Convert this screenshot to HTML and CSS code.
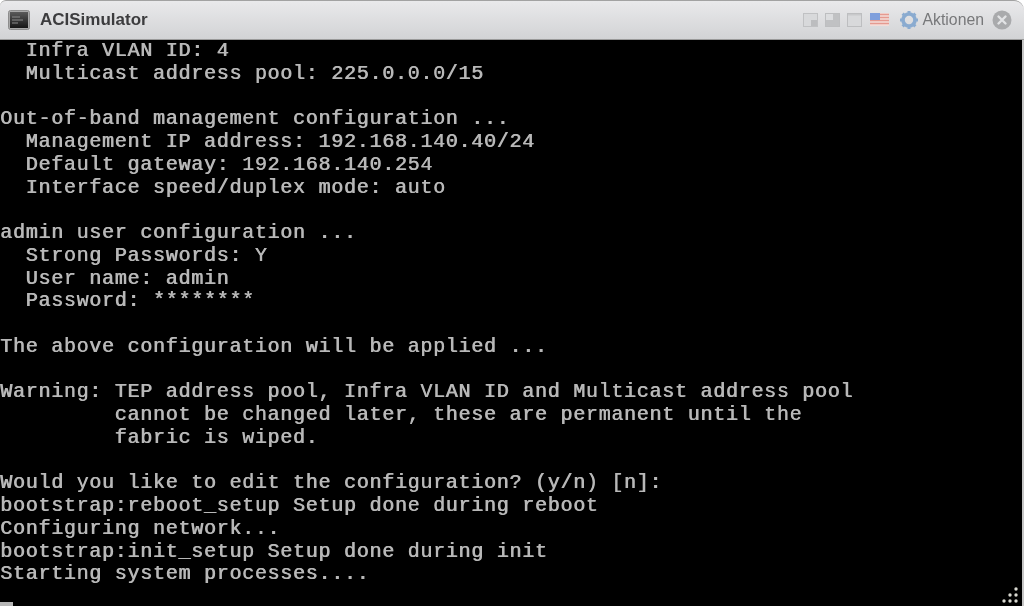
FILE: index.html
```html
<!DOCTYPE html>
<html lang="de">
<head>
<meta charset="utf-8">
<title>ACISimulator</title>
<link rel="stylesheet" href="styles.css">
</head>
<body>
<div class="window">
  <header class="titlebar">
    <div class="title-left">
      <svg class="app-icon" width="22" height="20" viewBox="0 0 22 20">
        <defs><linearGradient id="scr" x1="0" y1="0" x2="0" y2="1"><stop offset="0" stop-color="#5a5a5a"/><stop offset="1" stop-color="#161616"/></linearGradient></defs>
        <rect x="0.5" y="0.5" width="21" height="19" rx="2" fill="#a9a9a9" stroke="#8d8d8d"/>
        <rect x="2" y="2" width="18" height="16" fill="url(#scr)"/>
        <path d="M4 7h8M4 10h11M4 13h6" stroke="#8a8a8a" stroke-width="1.2"/>
      </svg>
      <span class="title">ACISimulator</span>
    </div>
    <div class="title-right">
      <svg class="tool" width="15" height="14" viewBox="0 0 15 14"><rect x="0.5" y="0.5" width="14" height="13" fill="#d8d9db" stroke="#c0c1c3"/><rect x="8" y="7" width="6" height="6" fill="#bcbdbf"/></svg>
      <svg class="tool" width="15" height="14" viewBox="0 0 15 14"><rect x="0.5" y="0.5" width="14" height="13" fill="#c0c1c3" stroke="#bdbec0"/><rect x="1" y="1" width="7" height="6" fill="#dcdddf"/></svg>
      <svg class="tool" width="15" height="14" viewBox="0 0 15 14"><rect x="0.5" y="0.5" width="14" height="13" fill="#d8d9db" stroke="#bdbec0"/><rect x="1" y="1" width="13" height="1.5" fill="#c8c9cb"/></svg>
      <svg class="flag" width="19" height="13" viewBox="0 0 19 13">
        <rect width="19" height="13" fill="#f3dcd8"/>
        <path d="M0 1.5h19M0 4.5h19M0 7.5h19M0 10.5h19" stroke="#e59a90" stroke-width="1.4"/>
        <rect width="10" height="7" fill="#7f9fdc"/>
      </svg>
      <svg class="gear" width="20" height="20" viewBox="0 0 20 20">
        <circle cx="10" cy="10" r="6" fill="none" stroke="#8aabd0" stroke-width="3.6"/>
        <path d="M10 1v3M10 16v3M1 10h3M16 10h3M3.6 3.6l2.1 2.1M14.3 14.3l2.1 2.1M3.6 16.4l2.1-2.1M14.3 5.7l2.1-2.1" stroke="#8aabd0" stroke-width="3"/>
      </svg>
      <span class="actions">Aktionen</span>
      <svg class="close" width="20" height="20" viewBox="0 0 20 20">
        <circle cx="10" cy="10" r="9.5" fill="#a9aaac"/>
        <path d="M6.5 6.5l7 7M13.5 6.5l-7 7" stroke="#e2e3e5" stroke-width="2.4" stroke-linecap="round"/>
      </svg>
    </div>
  </header>
  <main class="terminal">
<pre class="console">  Infra VLAN ID: 4
  Multicast address pool: 225.0.0.0/15

Out-of-band management configuration ...
  Management IP address: 192.168.140.40/24
  Default gateway: 192.168.140.254
  Interface speed/duplex mode: auto

admin user configuration ...
  Strong Passwords: Y
  User name: admin
  Password: ********

The above configuration will be applied ...

Warning: TEP address pool, Infra VLAN ID and Multicast address pool
         cannot be changed later, these are permanent until the
         fabric is wiped.

Would you like to edit the configuration? (y/n) [n]:
bootstrap:reboot_setup Setup done during reboot
Configuring network...
bootstrap:init_setup Setup done during init
Starting system processes....</pre>
    <div class="cursor"></div>
    <svg class="grip" width="20" height="20" viewBox="0 0 20 20" fill="#d8d8d0">
      <circle cx="14" cy="3" r="1.7"/><circle cx="8" cy="9" r="1.7"/><circle cx="14" cy="9" r="1.7"/><circle cx="2" cy="15" r="1.7"/><circle cx="8" cy="15" r="1.7"/><circle cx="14" cy="15" r="1.7"/>
    </svg>
  </main>
</div>
</body>
</html>
```
FILE: styles.css
```css
* { box-sizing: border-box; }
html, body { margin: 0; padding: 0; background: #fff; }
body { width: 1024px; height: 606px; overflow: hidden; }
.window { width: 1024px; height: 606px; display: flex; flex-direction: column; }
.titlebar {
  height: 40px;
  flex: none;
  display: flex;
  align-items: center;
  justify-content: space-between;
  padding: 0 12px 1px 8px;
  background: linear-gradient(#e9e9eb, #d2d3d5);
  border-top: 1px solid #a2a2a2;
  border-bottom: 1px solid #9a9a9a;
  border-radius: 6px 10px 0 0;
}
.title-left { display: flex; align-items: center; gap: 10px; }
.app-icon { filter: blur(.4px); }
.title {
  font: bold 17px "Liberation Sans", sans-serif;
  color: #3c3c3e;
  filter: blur(.35px);
}
.title-right { display: flex; align-items: center; filter: blur(.5px); }
.tool { margin-right: 7px; }
.flag { margin-left: 1px; margin-right: 10px; }
.actions {
  font: 15.8px "Liberation Sans", sans-serif;
  color: #77787a;
  margin-left: 4px;
  margin-right: 8px;
}
.terminal {
  position: relative;
  flex: 1;
  background: #000;
  overflow: hidden;
  border-right: 2px solid #c6c6c6;
}
.console {
  margin: 0;
  font-family: "Liberation Mono", monospace;
  font-size: 20px;
  letter-spacing: .73px;
  line-height: 22.75px;
  color: #b8b8b8;
  text-shadow: .7px 0 0 #b8b8b8;
  filter: blur(.4px);
}
.cursor {
  position: absolute;
  left: 0;
  bottom: 0;
  width: 13px;
  height: 4px;
  background: #b6b6b6;
}
.grip { position: absolute; right: 0; bottom: 0; filter: blur(.3px); }
```
